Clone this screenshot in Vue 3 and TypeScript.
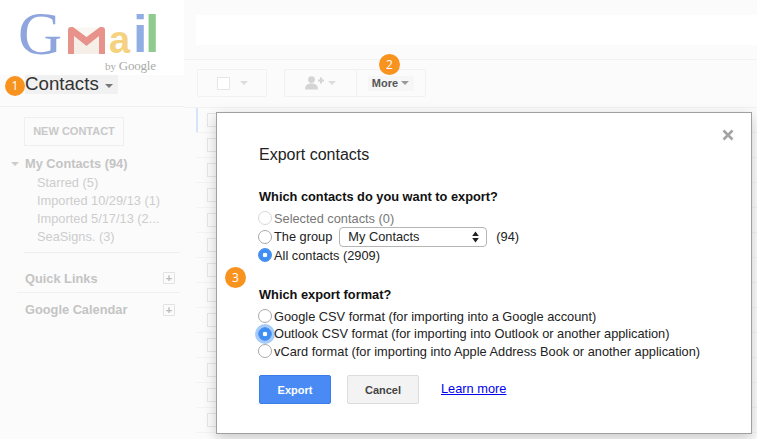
<script setup lang="ts">
const labels = [
  { name: 'Starred (5)' },
  { name: 'Imported 10/29/13 (1)' },
  { name: 'Imported 5/17/13 (2...' },
  { name: 'SeaSigns. (3)' },
]

const rows = Array.from({ length: 13 }, (_, i) => i)

const formats = [
  { text: 'Google CSV format (for importing into a Google account)', state: '' },
  { text: 'Outlook CSV format (for importing into Outlook or another application)', state: 'focused' },
  { text: 'vCard format (for importing into Apple Address Book or another application)', state: '' },
]
</script>

<template>
  <div class="page">
    <aside class="sidebar">
      <div class="logo">
        <span class="logo-g">G</span>
        <svg class="logo-m" width="37" height="27" viewBox="0 0 37 27">
          <path d="M6 9 L18.5 19 L31 9 V27 H6 Z" fill="#f5efe8" />
          <path d="M5 0.5 L18.5 10 L32 0.5 Z" fill="#faf7f3" />
          <path d="M0 3 Q0 0 3 0 H5 L18.5 10 L32 0 H34 Q37 0 37 3 V27 H31 V9 L18.5 19 L6 9 V27 H0 Z" fill="#e7938b" />
        </svg>
        <span class="logo-a">a</span>
        <span class="logo-i">i</span>
        <span class="logo-l">l</span>
        <span class="logo-by">by <b>Google</b></span>
      </div>
      <div class="contacts-row">
        <div class="contacts-btn">Contacts<i class="caret dark" /></div>
      </div>
      <div class="side-body">
        <div class="new-contact">NEW CONTACT</div>
        <div class="tree-head"><i class="caret tree-caret" />My Contacts (94)</div>
        <div v-for="l in labels" :key="l.name" class="tree-item">{{ l.name }}</div>
        <div class="side-sep" />
        <div class="section quick">Quick Links<span class="plus">+</span></div>
        <div class="section calendar">Google Calendar<span class="plus">+</span></div>
      </div>
    </aside>

    <main class="main">
      <div class="search-wrap"><div class="search" /></div>
      <div class="toolbar">
        <div class="tool select-tool"><span class="check" /><i class="caret light" /></div>
        <div class="tool-group">
          <div class="tool add-tool">
            <svg width="20" height="14" viewBox="0 0 20 14">
              <circle cx="6.5" cy="3.6" r="3.4" fill="#d4d4d4" />
              <path d="M0 13.5 C0 9 3 7.6 6.5 7.6 C10 7.6 13 9 13 13.5 Z" fill="#d4d4d4" />
              <path d="M13 4.4 H19 M16 1.4 V7.4" stroke="#d4d4d4" stroke-width="2" />
            </svg>
            <i class="caret light" />
          </div>
          <div class="tool more-tool"><div class="more-inner">More<i class="caret more-caret" /></div></div>
        </div>
      </div>
      <div class="list">
        <div v-for="r in rows" :key="r" class="row" :class="{ first: r === 0 }"><span class="check" /></div>
      </div>
    </main>

    <section class="dialog">
      <svg class="close" width="12" height="12" viewBox="0 0 12 12">
        <path d="M1.5 1.5 L10.5 10.5 M10.5 1.5 L1.5 10.5" stroke="#a3a3a3" stroke-width="2.6" />
      </svg>
      <h2 class="title">Export contacts</h2>
      <h3 class="question">Which contacts do you want to export?</h3>
      <div class="options contacts-opts">
        <label class="opt disabled"><span class="radio" />Selected contacts (0)</label>
        <label class="opt">
          <span class="radio" />The group
          <span class="select">My Contacts
            <svg width="7" height="12" viewBox="0 0 7 12"><path d="M3.5 0.5 L6.8 5 H0.2 Z M3.5 11.5 L0.2 7 H6.8 Z" fill="#222" /></svg>
          </span>
          <span class="count">(94)</span>
        </label>
        <label class="opt"><span class="radio checked" />All contacts (2909)</label>
      </div>
      <h3 class="question format-q">Which export format?</h3>
      <div class="options formats">
        <label v-for="f in formats" :key="f.text" class="opt">
          <span class="radio" :class="{ checked: f.state, focused: f.state }" />{{ f.text }}
        </label>
      </div>
      <div class="actions">
        <button class="btn primary">Export</button>
        <button class="btn">Cancel</button>
        <a class="learn" href="#">Learn more</a>
      </div>
    </section>

    <span class="badge b1">1</span>
    <span class="badge b2">2</span>
    <span class="badge b3">3</span>
  </div>
</template>

<style>
html, body { margin: 0; background: #fafafa; }
</style>

<style scoped>
.page {
  position: relative;
  display: flex;
  width: 757px;
  height: 439px;
  overflow: hidden;
  background: #fbfbfb;
  font-family: "Liberation Sans", Arial, sans-serif;
  font-size: 12.8px;
  color: #222;
}
.sidebar { width: 184px; flex: none; }
.logo {
  position: relative;
  height: 75px;
  background: #fff;
}
.logo span, .logo svg { position: absolute; }
.logo-g { left: 18px; top: 10px; font: 61px/0.8 "Liberation Serif", serif; color: #8ea5dd; }
.logo-m { left: 68px; top: 27px; }
.logo-a { left: 109px; top: 25px; font: bold 38px/0.8 "Liberation Sans", sans-serif; color: #f5d27f; }
.logo-i { left: 133px; top: 14px; font: bold 52px/0.8 "Liberation Sans", sans-serif; letter-spacing: -3px; color: #91aee4; }
.logo-l { left: 145px; top: 14px; font: bold 52px/0.8 "Liberation Sans", sans-serif; color: #8fcb8f; }
.logo-by { left: 105px; top: 58px; font: 11px/15px "Liberation Serif", serif; color: #aaa; }
.logo-by b { font-weight: 400; font-size: 13px; letter-spacing: -0.2px; }
.contacts-row {
  height: 32px;
  padding-left: 25px;
  box-sizing: border-box;
  border-bottom: 1px solid #f0f0f0;
}
.contacts-btn {
  display: inline-flex;
  align-items: center;
  height: 18px;
  padding: 0 5px 1px 0;
  background: #f1f1f1;
  font-size: 18.7px;
  color: #333;
}
.caret {
  display: inline-block;
  width: 0;
  height: 0;
  border-left: 4px solid transparent;
  border-right: 4px solid transparent;
  border-top: 4px solid #aaa;
}
.caret.dark { margin-left: 6px; margin-top: 3px; border-top-color: #777; }
.caret.light { border-top-color: #dcdcdc; }
.side-body { padding: 10px 4px 0 25px; color: #c4c4c4; }
.new-contact {
  width: 98px;
  height: 27px;
  margin-left: -1px;
  border: 1px solid #efefef;
  text-align: center;
  font: bold 11px/27px "Liberation Sans", sans-serif;
  color: #c8c8c8;
}
.tree-head {
  position: relative;
  margin-top: 9px;
  font-weight: bold;
  line-height: 18.5px;
}
.tree-caret { position: absolute; left: -14px; top: 7px; border-top-color: #ccc; }
.tree-item { padding-left: 12px; line-height: 18px; color: #cdcdcd; }
.side-sep { height: 1px; margin: 6px 0 0 -1px; background: #eee; }
.section {
  display: flex;
  align-items: center;
  justify-content: space-between;
  box-sizing: border-box;
  margin-left: -8px;
  padding: 0 5px 0 8px;
  font-weight: bold;
}
.section.quick { height: 28px; margin-top: 12px; border-bottom: 1px solid #f0f0f0; }
.section.calendar { height: 34px; }
.plus {
  width: 10px;
  height: 10px;
  border: 1px solid #e2e2e2;
  border-radius: 1px;
  font: bold 11px/10px "Liberation Sans", sans-serif;
  text-align: center;
  color: #bbb;
}
.main { flex: 1; min-width: 0; }
.search-wrap {
  height: 60px;
  padding: 15px 0 0 12px;
  box-sizing: border-box;
  border-bottom: 1px solid #f2f2f2;
}
.search { height: 30px; background: #fff; }
.toolbar {
  display: flex;
  gap: 17px;
  height: 48px;
  padding: 9px 0 0 13px;
  box-sizing: border-box;
  border-bottom: 1px solid #f2f2f2;
}
.tool {
  display: flex;
  align-items: center;
  justify-content: center;
  height: 28px;
  box-sizing: border-box;
  border: 1px solid #f1f1f1;
  border-radius: 2px;
}
.select-tool { width: 70px; gap: 10px; }
.tool-group { display: flex; }
.add-tool { width: 72px; gap: 3px; border-right: 0; border-radius: 2px 0 0 2px; }
.more-tool { width: 70px; border-radius: 0 2px 2px 0; }
.more-inner {
  display: flex;
  align-items: center;
  gap: 3px;
  height: 15px;
  padding: 0 5px 0 4px;
  background: #f6f6f6;
  font: bold 11px/15px "Liberation Sans", sans-serif;
  color: #555;
}
.more-caret { border-top-color: #999; }
.check {
  display: block;
  width: 11px;
  height: 11px;
  border: 1px solid #e6e6e6;
  background: #fff;
}
.list { padding-left: 12px; }
.row {
  display: flex;
  align-items: center;
  height: 25px;
  padding-left: 11px;
  box-sizing: border-box;
  border-bottom: 1px solid #f3f3f3;
}
.row .check { width: 12px; height: 12px; background: #fbfbfb; }
.row.first { box-shadow: inset 2px 0 0 #d5e3fb; }
.dialog {
  position: absolute;
  left: 216px;
  top: 112px;
  width: 536px;
  height: 322px;
  padding: 32px 0 0 42px;
  box-sizing: border-box;
  background: #fff;
  border: 1px solid #a0a0a0;
  box-shadow: 0 4px 12px rgba(0, 0, 0, 0.2);
}
.close { position: absolute; right: 17px; top: 16px; }
.title { margin: 0; font-size: 16px; font-weight: 400; line-height: 20px; color: #222; }
.question { margin: 23px 0 0; font-size: 12.8px; font-weight: bold; line-height: 18px; color: #111; }
.format-q { margin-top: 21px; }
.options { margin-top: 4px; }
.contacts-opts { margin-top: 3px; }
.opt {
  display: flex;
  align-items: center;
  height: 18.5px;
  white-space: nowrap;
}
.formats .opt { height: 17.5px; }
.opt.disabled { color: #777; }
.radio {
  flex: none;
  width: 12px;
  height: 12px;
  margin: 0 2px 0 -1px;
  border: 1px solid #aaa;
  border-radius: 50%;
  background: #fff;
}
.disabled .radio { border-color: #d8d8d8; }
.radio.checked {
  border-color: #4a90f0;
  background: radial-gradient(circle, #fff 0 2px, #3f8ef5 2.6px);
}
.radio.focused { box-shadow: 0 0 0 3px #a6cbf8; }
.select {
  display: flex;
  align-items: center;
  justify-content: space-between;
  width: 148px;
  height: 20px;
  margin: 0 9px 0 7px;
  padding: 0 7px 0 8px;
  box-sizing: border-box;
  border: 1px solid #b5b5b5;
  border-radius: 4px;
  background: #fff;
  color: #222;
}
.actions { display: flex; align-items: center; margin-top: 15px; }
.btn {
  width: 72px;
  height: 29px;
  padding: 0;
  margin-right: 16px;
  border: 1px solid #dcdcdc;
  border-radius: 2px;
  background: #f3f3f3;
  font: bold 11px "Liberation Sans", sans-serif;
  color: #444;
}
.btn.primary { border-color: #3b7de8; background: #4a8af4; color: #fff; }
.learn { margin-left: 6px; margin-top: -2px; color: #0000ee; font-size: 12.8px; }
.badge {
  position: absolute;
  width: 20px;
  height: 20px;
  border-radius: 50%;
  background: #f7931e;
  color: #fff;
  font: 12px/20px "Open Sans", sans-serif;
  text-align: center;
}
.b1 { left: 5px; top: 76px; }
.b2 { left: 379px; top: 54px; width: 21px; height: 21px; line-height: 21px; }
.b3 { left: 225px; top: 267px; width: 21px; height: 21px; line-height: 21px; }
</style>
